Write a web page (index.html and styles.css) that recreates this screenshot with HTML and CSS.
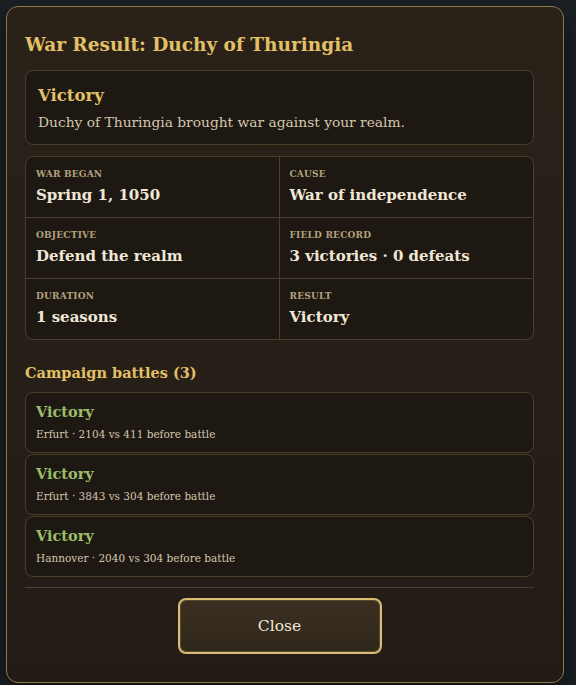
FILE: index.html
```html
<!DOCTYPE html>
<html lang="en">
<head>
    <meta charset="UTF-8">
    <meta name="viewport" content="width=device-width, initial-scale=1.0">
    <title>War Result</title>
    <link rel="stylesheet" href="styles.css">
</head>
<body>
    <div class="modal">
        <div class="modal-body">
            <h2 class="modal-title">War Result: Duchy of Thuringia</h2>

            <div class="outcome">
                <div class="outcome-title">Victory</div>
                <div class="outcome-text">Duchy of Thuringia brought war against your realm.</div>
            </div>

            <div class="facts">
                <div class="fact">
                    <div class="fact-label">War began</div>
                    <div class="fact-value">Spring 1, 1050</div>
                </div>
                <div class="fact">
                    <div class="fact-label">Cause</div>
                    <div class="fact-value">War of independence</div>
                </div>
                <div class="fact">
                    <div class="fact-label">Objective</div>
                    <div class="fact-value">Defend the realm</div>
                </div>
                <div class="fact">
                    <div class="fact-label">Field record</div>
                    <div class="fact-value">3 victories · 0 defeats</div>
                </div>
                <div class="fact">
                    <div class="fact-label">Duration</div>
                    <div class="fact-value">1 seasons</div>
                </div>
                <div class="fact">
                    <div class="fact-label">Result</div>
                    <div class="fact-value">Victory</div>
                </div>
            </div>

            <h3 class="section-title">Campaign battles (3)</h3>
            <div class="battles">
                <div class="battle">
                    <div class="battle-result">Victory</div>
                    <div class="battle-info">Erfurt · 2104 vs 411 before battle</div>
                </div>
                <div class="battle">
                    <div class="battle-result">Victory</div>
                    <div class="battle-info">Erfurt · 3843 vs 304 before battle</div>
                </div>
                <div class="battle">
                    <div class="battle-result">Victory</div>
                    <div class="battle-info">Hannover · 2040 vs 304 before battle</div>
                </div>
            </div>
        </div>

        <div class="modal-footer">
            <button class="close-btn">Close</button>
        </div>
    </div>
</body>
</html>
```

FILE: styles.css
```css
:root {
    --page-bg: #1b2125;
    --modal-bg: #261f18;
    --card-bg: #1e1813;
    --frame: #8f7548;
    --line: #4a3e2b;
    --gold: #e2c066;
    --green: #9bbd67;
    --text: #f0e7d6;
    --muted: #d4c7ad;
    --label: #b3a27c;
}

* {
    box-sizing: border-box;
    margin: 0;
    padding: 0;
}

body {
    background: var(--page-bg);
    font-family: 'DejaVu Serif', Georgia, serif;
    color: var(--text);
    height: 685px;
    overflow: hidden;
}

.modal {
    margin: 6px;
    width: 558px;
    height: 677px;
    display: flex;
    flex-direction: column;
    background: linear-gradient(180deg, #2a2219 0%, #231c16 100%);
    border: 1.5px solid var(--frame);
    border-radius: 12px;
    box-shadow: 0 10px 30px rgba(0,0,0,0.6);
}

.modal-body {
    flex: 1;
    overflow: hidden;
    padding: 26px 29px 0 18px;
}

.modal-title {
    font-size: 18.5px;
    font-weight: bold;
    color: var(--gold);
    line-height: 24px;
    margin-bottom: 13px;
}

.outcome {
    background: var(--card-bg);
    border: 1px solid var(--line);
    border-radius: 8px;
    padding: 13px 12px 11px;
    margin-bottom: 11px;
}

.outcome-title {
    font-size: 16.5px;
    font-weight: bold;
    color: var(--gold);
    line-height: 24px;
}

.outcome-text {
    font-size: 13.8px;
    color: var(--muted);
    line-height: 22px;
    margin-top: 3px;
}

.facts {
    display: grid;
    grid-template-columns: 1fr 1fr;
    background: var(--card-bg);
    border: 1px solid var(--line);
    border-radius: 8px;
    overflow: hidden;
    margin-bottom: 22px;
}

.fact {
    height: 61px;
    padding: 11px 10px 0;
    border-bottom: 1px solid var(--line);
}

.fact:nth-child(odd) {
    border-right: 1px solid var(--line);
}

.fact:nth-last-child(-n+2) {
    border-bottom: none;
    height: 60px;
}

.fact-label {
    font-size: 9px;
    font-weight: bold;
    letter-spacing: 0.2px;
    text-transform: uppercase;
    color: var(--label);
    line-height: 12px;
}

.fact-value {
    font-size: 15px;
    font-weight: bold;
    color: var(--text);
    line-height: 22px;
    margin-top: 4px;
}

.section-title {
    font-size: 14.5px;
    font-weight: bold;
    color: var(--gold);
    line-height: 22px;
    margin-bottom: 8px;
}

.battles {
    display: flex;
    flex-direction: column;
    gap: 1px;
}

.battle {
    height: 61px;
    background: var(--card-bg);
    border: 1px solid var(--line);
    border-radius: 8px;
    padding: 9px 10px 0;
}

.battle-result {
    font-size: 14.5px;
    font-weight: bold;
    color: var(--green);
    line-height: 20px;
}

.battle-info {
    font-size: 10.5px;
    color: var(--muted);
    line-height: 18px;
    margin-top: 3px;
}

.modal-footer {
    margin: 0 29px 0 18px;
    border-top: 1px solid var(--line);
    padding: 10px 0 28px;
    display: flex;
    justify-content: center;
}

.close-btn {
    width: 204px;
    height: 56px;
    font-family: inherit;
    font-size: 15.5px;
    color: var(--text);
    background: linear-gradient(180deg, #3b2f21 0%, #30271c 100%);
    border: 2px solid #d9bd72;
    border-radius: 8px;
    box-shadow: inset 0 0 0 1px #5a4a2e;
    cursor: pointer;
}
```
